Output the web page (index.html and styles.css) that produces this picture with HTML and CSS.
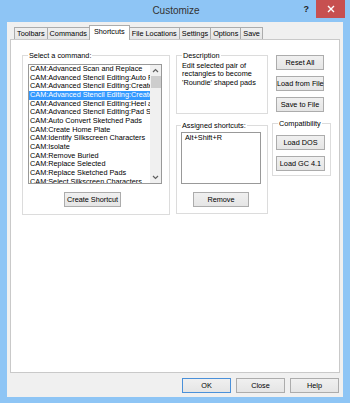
FILE: index.html
```html
<!DOCTYPE html>
<html>
<head>
<meta charset="utf-8">
<link rel="stylesheet" href="styles.css">
</head>
<body>
<div class="window">
  <div class="titlebar">
    <div></div>
    <div class="title">Customize</div>
    <div class="controls">
      <span class="help">?</span>
      <span class="close"><svg width="8" height="8" viewBox="0 0 8 8"><path d="M1 1L7 7M7 1L1 7" stroke="#fff" stroke-width="1.4" fill="none"/></svg></span>
    </div>
  </div>
  <div class="client">
    <div class="tabs">
      <div class="tab">Toolbars</div>
      <div class="tab">Commands</div>
      <div class="tab active">Shortcuts</div>
      <div class="tab">File Locations</div>
      <div class="tab">Settings</div>
      <div class="tab">Options</div>
      <div class="tab">Save</div>
    </div>
    <div class="panel">
      <fieldset class="group cmd-group">
        <legend>Select a command:</legend>
        <div class="listbox cmd-list">
          <div class="items">
            <div class="item">CAM:Advanced Scan and Replace</div>
            <div class="item">CAM:Advanced Stencil Editing:Auto Pad Relief</div>
            <div class="item">CAM:Advanced Stencil Editing:Create Home Plate</div>
            <div class="item selected">CAM:Advanced Stencil Editing:Create Roundie Pads</div>
            <div class="item">CAM:Advanced Stencil Editing:Heel and Toe</div>
            <div class="item">CAM:Advanced Stencil Editing:Pad Split</div>
            <div class="item">CAM:Auto Convert Sketched Pads</div>
            <div class="item">CAM:Create Home Plate</div>
            <div class="item">CAM:Identify Silkscreen Characters</div>
            <div class="item">CAM:Isolate</div>
            <div class="item">CAM:Remove Buried</div>
            <div class="item">CAM:Replace Selected</div>
            <div class="item">CAM:Replace Sketched Pads</div>
            <div class="item">CAM:Select Silkscreen Characters</div>
          </div>
          <div class="vscroll">
            <div class="arrow"><svg width="7" height="5" viewBox="0 0 7 5"><path d="M1 4L3.5 1.5L6 4" stroke="#606060" stroke-width="1.2" fill="none"/></svg></div>
            <div class="thumb"></div>
            <div class="track"></div>
            <div class="arrow"><svg width="7" height="5" viewBox="0 0 7 5"><path d="M1 1L3.5 3.5L6 1" stroke="#606060" stroke-width="1.2" fill="none"/></svg></div>
          </div>
        </div>
        <button class="btn create-btn">Create Shortcut</button>
      </fieldset>

      <div class="col2">
        <fieldset class="group desc-group">
          <legend>Description</legend>
          <div class="desc">Edit selected pair of<br>rectangles to become<br>'Roundie' shaped pads</div>
        </fieldset>
        <fieldset class="group assigned-group">
          <legend>Assigned shortcuts:</legend>
          <div class="listbox assigned-list">Alt+Shift+R</div>
          <button class="btn remove-btn">Remove</button>
        </fieldset>
      </div>

      <div class="col3">
        <button class="btn side-btn first">Reset All</button>
        <button class="btn side-btn">Load from File</button>
        <button class="btn side-btn">Save to File</button>
        <fieldset class="group compat-group">
          <legend>Compatibility</legend>
          <button class="btn compat-btn first">Load DOS</button>
          <button class="btn compat-btn">Load GC 4.1</button>
        </fieldset>
      </div>
    </div>
    <div class="footer">
      <button class="btn foot-btn default">OK</button>
      <button class="btn foot-btn">Close</button>
      <button class="btn foot-btn">Help</button>
    </div>
  </div>
</div>
</body>
</html>
```

FILE: styles.css
```css
html, body {
  margin: 0;
  padding: 0;
}
body {
  width: 350px;
  height: 403px;
  overflow: hidden;
  font-family: "Liberation Sans", Arial, sans-serif;
  font-size: 7.3px;
  color: #000;
}
.window {
  box-sizing: border-box;
  width: 350px;
  height: 403px;
  background: #8ec5f5;
  padding: 0 7px 6px 7px;
  display: flex;
  flex-direction: column;
}
.titlebar {
  height: 22px;
  display: grid;
  grid-template-columns: 1fr auto 1fr;
  margin: 0 -2px 0 0;
}
.title {
  font-size: 10px;
  line-height: 22px;
  color: #333;
}
.controls {
  display: flex;
  justify-content: flex-end;
  align-items: flex-start;
}
.help {
  font-size: 9px;
  font-weight: bold;
  color: #222;
  line-height: 18px;
  margin-right: 7px;
}
.close {
  width: 29px;
  height: 18px;
  background: #c75050;
  display: flex;
  align-items: center;
  justify-content: center;
}
.client {
  flex: 1;
  background: #f0f0f0;
  display: flex;
  flex-direction: column;
}
.tabs {
  height: 17px;
  display: flex;
  align-items: flex-end;
  padding-left: 7px;
}
.tab {
  box-sizing: border-box;
  height: 12px;
  line-height: 11px;
  padding: 0 2px;
  border: 1px solid #acacac;
  border-bottom: none;
  background: linear-gradient(#f0f0f0, #e5e5e5);
  margin-left: -1px;
  white-space: nowrap;
}
.tab:first-child {
  margin-left: 0;
}
.tab.active {
  height: 15px;
  margin-bottom: -1px;
  background: #fff;
  padding: 0 4px;
  position: relative;
  z-index: 1;
}
.panel {
  box-sizing: border-box;
  height: 334px;
  margin: 0 3px;
  background: #fff;
  border: 1px solid #c9c9c9;
  padding: 11px 0 0 11px;
  display: flex;
  align-items: flex-start;
}
.group {
  box-sizing: border-box;
  margin: 0;
  padding: 0 4px 0 4px;
  min-width: 0;
  border: 1px solid #dcdcdc;
}
.group legend {
  padding: 0 1px;
  margin-left: 0;
  line-height: 9px;
  font-size: 7.3px;
}
.cmd-group {
  width: 148px;
  height: 164px;
  padding: 0 5px;
}
.listbox {
  box-sizing: border-box;
  border: 1px solid #999;
  background: #fff;
}
.cmd-list {
  width: 134px;
  height: 120px;
  margin-top: 4px;
  display: flex;
}
.items {
  flex: 1;
  overflow: hidden;
  min-width: 0;
}
.item {
  height: 8.67px;
  line-height: 8.67px;
  white-space: nowrap;
  padding-left: 1px;
  overflow: hidden;
}
.item.selected {
  background: #3399ff;
  color: #fff;
}
.vscroll {
  width: 11px;
  background: #f0f0f0;
  display: flex;
  flex-direction: column;
}
.arrow {
  height: 11px;
  display: flex;
  align-items: center;
  justify-content: center;
}
.thumb {
  height: 12px;
  background: #cdcdcd;
  margin: 0 0 0 1px;
}
.track {
  flex: 1;
}
.btn {
  box-sizing: border-box;
  display: block;
  height: 15px;
  padding: 0;
  margin: 0;
  border: 1px solid #acacac;
  background: linear-gradient(#f0f0f0, #e5e5e5);
  font: inherit;
  color: #000;
  line-height: 13px;
  text-align: center;
  white-space: nowrap;
}
.create-btn {
  width: 57px;
  margin: 8px 0 0 36px;
}
.col2 {
  margin-left: 6px;
  width: 92px;
  display: flex;
  flex-direction: column;
}
.desc-group {
  width: 92px;
  height: 63px;
  padding: 0 4px 0 5px;
}
.desc {
  margin-top: 1.5px;
  line-height: 8.67px;
}
.assigned-group {
  width: 92px;
  height: 93px;
  margin-top: 7px;
}
.assigned-list {
  width: 80px;
  height: 52px;
  margin-top: 2px;
  padding: 1px 0 0 3px;
  line-height: 8.67px;
}
.remove-btn {
  width: 56px;
  margin: 8px 0 0 12px;
}
.col3 {
  margin-left: 4px;
  width: 59px;
  display: flex;
  flex-direction: column;
}
.side-btn {
  width: 48px;
  margin: 6px 0 0 4px;
}
.side-btn.first {
  margin-top: 4px;
}
.compat-group {
  width: 59px;
  height: 57px;
  margin-top: 7px;
  padding: 0 3px;
}
.compat-group legend {
  margin-left: 2px;
}
.compat-btn {
  width: 49px;
  margin-top: 6px;
}
.compat-btn.first {
  margin-top: 7px;
}
.footer {
  display: flex;
  justify-content: flex-end;
  gap: 5px;
  margin-top: 5px;
  padding-right: 4px;
}
.foot-btn {
  width: 49px;
}
.foot-btn.default {
  border-color: #4a90d9;
}
```
